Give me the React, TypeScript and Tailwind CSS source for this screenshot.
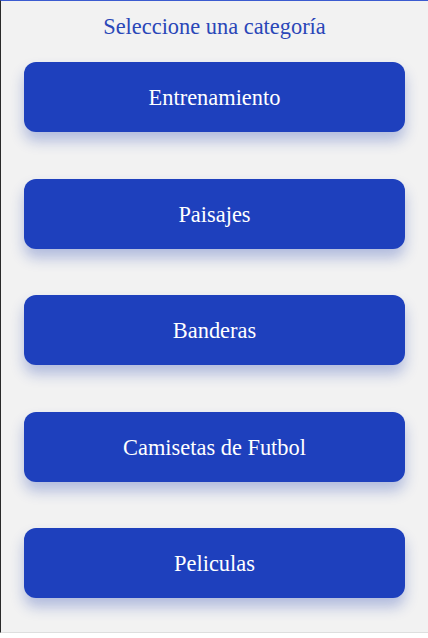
import React from "react";

const items = ["Entrenamiento", "Paisajes", "Banderas", "Camisetas de Futbol", "Peliculas"];

export default function App() {
  return (
    <div className="w-[428px] bg-white font-['Liberation_Serif','Times_New_Roman',serif]">
      <div className="h-[633px] bg-[#f2f2f2] border-t border-t-[#3b5bd0] border-l border-l-[#2a2a2a] border-b border-b-[#dedede] pt-[13px]">
        <h1 className="text-center text-[22.4px] leading-[26px] text-[#2a47b8] font-normal">Seleccione una categoría</h1>
        <div className="mt-[22px] flex flex-col gap-[46.5px] px-[23px]">
          {items.map((t) => (
            <button
              key={t}
              className="h-[70px] w-full rounded-[12px] bg-[#1e40bd] pt-[2px] text-white font-['Liberation_Serif','Times_New_Roman',serif] text-[22.4px] leading-[26px] shadow-[0_9px_14px_rgba(30,64,175,0.3)]"
            >
              {t}
            </button>
          ))}
        </div>
      </div>
    </div>
  );
}
